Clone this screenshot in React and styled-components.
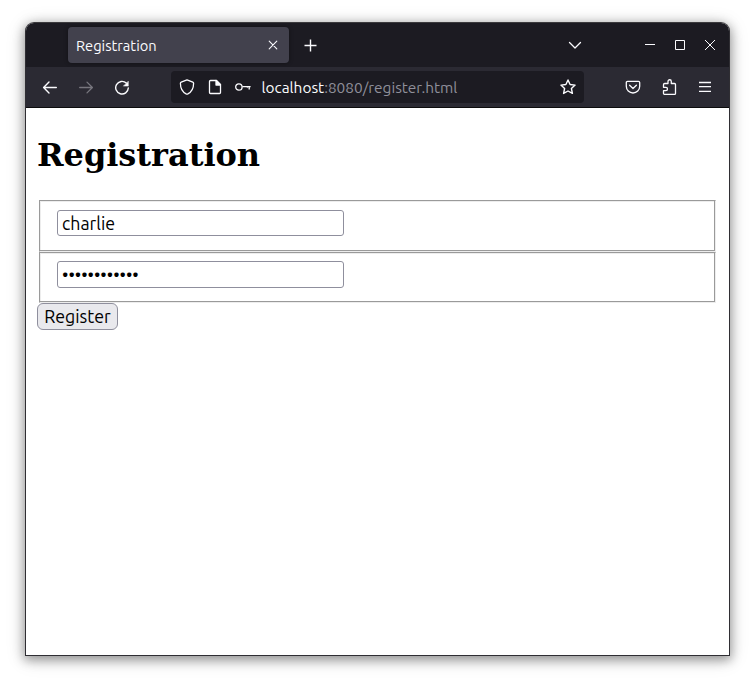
import React from 'react';
import styled, { createGlobalStyle } from 'styled-components';

const Global = createGlobalStyle`
  * { box-sizing: border-box; }
  body { margin: 0; background: #fff; }
`;

const Desktop = styled.div`
  width: 755px;
  height: 684px;
  padding: 22px 25px 28px;
  overflow: hidden;
  background: #fff;
`;

const Window = styled.div`
  width: 705px;
  height: 634px;
  display: flex;
  flex-direction: column;
  border: 1px solid #2f2e33;
  border-top-color: #3b3a3d;
  border-radius: 9px 9px 0 0;
  background: #fff;
  overflow: hidden;
  box-shadow: 0 3px 11px 1px rgba(0, 0, 0, 0.36), 0 3px 20px 0 rgba(0, 0, 0, 0.15);
`;

const ui = `font-family: Ubuntu, "Noto Sans", sans-serif;`;

const TitleBar = styled.div`
  height: 44px;
  flex: none;
  display: flex;
  align-items: center;
  padding: 0 11px 0 42px;
  background: #1c1b22;
`;

const Tab = styled.div`
  width: 221px;
  height: 36px;
  display: flex;
  align-items: center;
  justify-content: space-between;
  padding: 0 8px;
  border-radius: 4px;
  background: #42414d;
  color: #fbfbfe;
  box-shadow: 0 0 4px rgba(0, 0, 0, 0.4);
`;

const TabTitle = styled.span`
  padding-top: 2px;
  ${ui}
  font-size: 14.667px;
  line-height: 20px;
`;

const Icon = styled.svg`
  display: block;
  flex: none;
  width: 16px;
  height: 16px;
  margin-left: ${(p) => p.$gap || 0}px;
  fill: none;
  stroke: ${(p) => p.$color || '#fbfbfe'};
  stroke-width: ${(p) => p.$weight || 1.3};
  stroke-linecap: round;
  stroke-linejoin: round;
`;

const CrispIcon = styled(Icon)`
  stroke-linecap: butt;
  stroke-linejoin: miter;
`;

const Spacer = styled.div`
  flex: 1;
`;

const Toolbar = styled.div`
  height: 41px;
  flex: none;
  display: flex;
  align-items: center;
  padding: 0 16px;
  background: #2b2a33;
  border-bottom: 1px solid #0c0c0d;
`;

const AddressBar = styled.div`
  width: 413px;
  height: 32px;
  margin-left: 41px;
  padding: 0 8px;
  display: flex;
  align-items: center;
  border-radius: 4px;
  background: #1c1b22;
`;

const Address = styled.span`
  margin-left: 10.5px;
  padding-top: 2px;
  ${ui}
  font-size: 15.4px;
  line-height: 22px;
  color: #8f8f9a;
  white-space: nowrap;
`;

const Host = styled.span`
  color: #fbfbfe;
`;

const Page = styled.main`
  flex: 1;
  padding: 26px 11px 0;
`;

const Heading = styled.h1`
  margin: 0 0 24px;
  font: bold 32px/42px "DejaVu Serif", serif;
  letter-spacing: -0.03px;
  color: #000;
`;

const Group = styled.fieldset`
  height: ${(p) => p.$height}px;
  margin: 0 2px;
  padding: ${(p) => p.$top}px 17px 0;
  border: 1px solid #9a9a9a;
  border-color: #9a9a9a #ededed #ededed #9a9a9a;
  box-shadow: inset -1px -1px #9a9a9a, inset 1px 1px #ededed;
`;

const Field = styled.input`
  display: block;
  width: 287px;
  height: ${(p) => p.$height}px;
  margin: 0;
  padding: 0 4px ${(p) => p.$lift}px;
  border: 1px solid #8f8f9d;
  border-radius: 3px;
  outline: none;
  background: #fff;
  color: #000;
  ${ui}
  font-size: 17.78px;
`;

const Submit = styled.button`
  display: block;
  width: 81px;
  height: 27px;
  padding: 0;
  border: 1px solid #8f8f9d;
  border-radius: 6px;
  background: #e9e9ed;
  color: #000;
  ${ui}
  font-size: 17.78px;
  line-height: 25px;
`;

export default function App() {
  return (
    <Desktop>
      <Global />
      <Window>
        <TitleBar>
          <Tab>
            <TabTitle>Registration</TabTitle>
            <Icon $weight={1.1}><path d="M4.200 4.200l7.600 7.600M11.800 4.200l-7.600 7.600" /></Icon>
          </Tab>
          <CrispIcon $gap={14} $weight={1.4}><path d="M7.500 2.500v12M1.500 8.500h12" /></CrispIcon>
          <Spacer />
          <Icon><path d="M2.500 5.500L8 11l5.500-5.500" /></Icon>
          <CrispIcon $gap={59} $weight={1}><path d="M3 7.500h10" /></CrispIcon>
          <CrispIcon $gap={14} $weight={1}><path d="M3.500 3.500h9v9h-9z" /></CrispIcon>
          <CrispIcon $gap={14} $weight={1}><path d="M3 3l10 10M13 3L3 13" /></CrispIcon>
        </TitleBar>
        <Toolbar>
          <Icon $weight={1.4}><path d="M14.300 8.500H1.800M7 3.100L1.600 8.500 7 13.900" /></Icon>
          <Icon $gap={20} $color="#77767e" $weight={1.3}><path d="M1.700 8.500h12.500M9 3.100L14.400 8.500 9 13.900" /></Icon>
          <Icon $gap={20} $weight={1.4}>
            <path d="M14.300 9A6.300 6.300 0 1 1 12.300 4.100" />
            <path d="M14.300 2.500v4.600H9.700z" fill="#fbfbfe" strokeWidth="0.5" />
          </Icon>
          <AddressBar>
            <Icon><path d="M8 .9l5.800 2.200c.5.200.8.600.8 1.100 0 4.800-1.600 8.400-5.700 10.700-.6.300-1.200.3-1.800 0C3 12.600 1.400 9 1.400 4.200c0-.5.300-.9.800-1.100z" /></Icon>
            <Icon $gap={12}>
              <path d="M3.500 1.500h6l4 4v7.900c0 .6-.4 1.100-1 1.100h-9c-.6 0-1-.4-1-1V2.500c0-.6.400-1 1-1z" />
              <path d="M9 1.500V6h4.500z" fill="#fbfbfe" />
            </Icon>
            <Icon $gap={12}>
              <circle cx="3.900" cy="8" r="3.200" />
              <path d="M7.300 7.600h8.300M14.200 7.800v2.800" strokeLinecap="butt" />
              <path d="M12.300 7.800v1.300" strokeWidth="0.700" strokeLinecap="butt" />
            </Icon>
            <Address><Host>localhost</Host>:8080/register.html</Address>
            <Spacer />
            <Icon $weight={1.4}><path d="M8 1l2.100 4.500 5 .6-3.700 3.400 1 4.900L8 12l-4.400 2.400 1-4.900L.9 6.100l5-.6z" /></Icon>
          </AddressBar>
          <Spacer />
          <Icon><path d="M2.500 2.300h11c.7 0 1.200.5 1.200 1.200v3.800a6.700 6.700 0 0 1-13.400 0V3.500c0-.7.500-1.200 1.200-1.200zM4.600 6.200L8 9.500l3.400-3.300" /></Icon>
          <Icon $gap={20}><path d="M7 4.500V2.400a1.650 1.650 0 0 1 3.300 0v2.100h3.200c.6 0 1 .4 1 1v8.900c0 .6-.4 1-1 1H3.700c-.7 0-1.200-.5-1.200-1.200v-2.500h2.300a1.700 1.700 0 0 0 0-3.400H2.500V5.700c0-.7.500-1.200 1.200-1.200z" /></Icon>
          <CrispIcon $gap={20} $weight={1.300}><path d="M2 3.500h12M2 7.700h12M2 12.300h12" /></CrispIcon>
        </Toolbar>
        <Page>
          <Heading>Registration</Heading>
          <Group $height={52} $top={9}>
            <Field $height={26} $lift={1} aria-label="Username" defaultValue="charlie" />
          </Group>
          <Group $height={51} $top={8}>
            <Field $height={27} $lift={2} type="password" aria-label="Password" defaultValue="correcthorse" />
          </Group>
          <Submit type="button">Register</Submit>
        </Page>
      </Window>
    </Desktop>
  );
}
